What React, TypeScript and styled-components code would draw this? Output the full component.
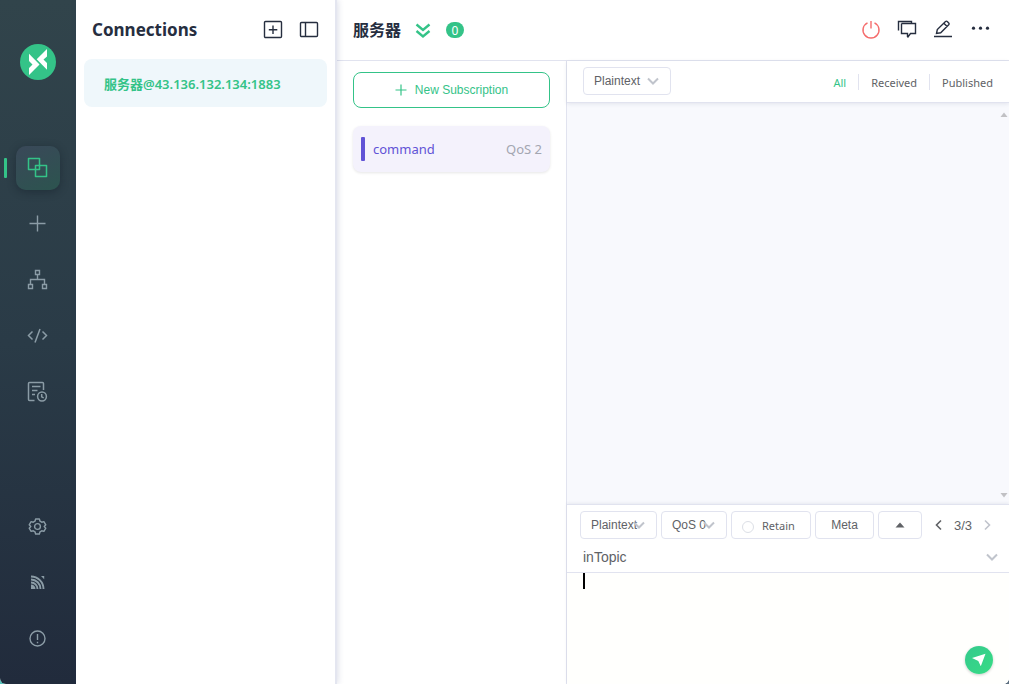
import React, { useState } from "react";
import styled, { createGlobalStyle, css } from "styled-components";

const colors = {
  green: "#34c388",
  ink: "#262e3f",
  text: "#606266",
  line: "#e1e3ef",
  mist: "#f8f9fd",
  purple: "#6153d6",
  faint: "#c0c4cc",
  nav: "#8b9ca6",
};

const uiFont = `"Noto Sans", "Noto Sans CJK SC", sans-serif`;
const arial = `"Liberation Sans", sans-serif`;

const GlobalStyle = createGlobalStyle`
  * { box-sizing: border-box; }
  body {
    margin: 0;
    font-family: ${uiFont};
    color: ${colors.text};
    background: linear-gradient(90deg, #55c4bd 0, #55c4bd 20px, #5d6f80 100%);
  }
  button, input, select, textarea { font: inherit; color: inherit; }
`;

const Shell = styled.div`
  display: grid;
  grid-template-columns: 76px 261px minmax(0, 1fr);
  min-height: 100vh;
  overflow: hidden;
  background: #fff;
  border-radius: 0 0 6px 6px;
`;

const Icon = styled.svg<{ $size?: number }>`
  display: block;
  flex: none;
  width: ${(p) => p.$size ?? 20}px;
  height: ${(p) => p.$size ?? 20}px;
  fill: none;
  stroke: currentColor;
`;

const plain = css`
  padding: 0;
  border: 0;
  background: none;
  cursor: pointer;
`;

/* Left navigation */
const Nav = styled.nav`
  display: flex;
  flex-direction: column;
  align-items: center;
  justify-content: space-between;
  padding: 44px 0 23px;
  background: linear-gradient(180deg, #31444b 0%, #2a3b47 50%, #212b3c 100%);
`;

const NavGroup = styled.div`
  display: flex;
  flex-direction: column;
  align-items: center;
  gap: 12px;
`;

const Logo = styled.svg`
  display: block;
  width: 36px;
  height: 36px;
  margin-bottom: 54px;
`;

const NavButton = styled.button<{ $active?: boolean }>`
  ${plain}
  position: relative;
  display: grid;
  place-items: center;
  width: 44px;
  height: 44px;
  border-radius: 10px;
  color: ${colors.nav};
  ${(p) =>
    p.$active &&
    css`
      color: ${colors.green};
      background: linear-gradient(155deg, #3a4859, #2c544f);
      box-shadow: 0 2px 8px rgba(15, 25, 35, 0.4);
      &::before {
        content: "";
        position: absolute;
        left: -12px;
        top: 12px;
        width: 3px;
        height: 20px;
        border-radius: 1px;
        background: ${colors.green};
      }
    `}
`;

/* Connection list */
const Connections = styled.aside`
  position: relative;
  padding: 0 8px;
  border-right: 2px solid #e4e6f0;
  box-shadow: 1px 0 6px rgba(40, 50, 110, 0.16);
`;

const ConnectionsHead = styled.header`
  display: flex;
  align-items: center;
  gap: 16px;
  height: 59px;
  padding: 0 8px;
`;

const Title = styled.h1`
  flex: 1;
  margin: 0;
  font-size: 17px;
  font-weight: 700;
  line-height: 24px;
  color: ${colors.ink};
`;

const IconButton = styled.button<{ $color?: string }>`
  ${plain}
  color: ${(p) => p.$color ?? colors.ink};
`;

const Connection = styled.a`
  display: flex;
  align-items: center;
  height: 48px;
  padding: 0 20px;
  border-radius: 8px;
  background: #eff7fb;
  color: ${colors.green};
  font-size: 13px;
  font-weight: 600;
  text-decoration: none;
  white-space: nowrap;
`;

/* Main area */
const Main = styled.main`
  display: flex;
  flex-direction: column;
  min-width: 0;
`;

const TopBar = styled.header`
  display: flex;
  align-items: center;
  height: 61px;
  padding: 0 18px 0 16px;
  border-bottom: 1px solid ${colors.line};
`;

const Name = styled.h2`
  margin: 0;
  font-size: 16px;
  font-weight: 600;
  line-height: 24px;
  color: ${colors.ink};
`;

const Collapse = styled(IconButton)`
  margin: 0 13px 0 12px;
`;

const Badge = styled.span`
  display: grid;
  place-items: center;
  width: 18px;
  height: 16px;
  border-radius: 8px;
  background: ${colors.green};
  color: #fff;
  font-size: 12px;
  line-height: 18px;
`;

const Tools = styled.div`
  display: flex;
  align-items: center;
  gap: 16px;
  margin-left: auto;
`;

const Body = styled.div`
  display: grid;
  flex: 1;
  grid-template-columns: 230px minmax(0, 1fr);
`;

const Subscriptions = styled.section`
  padding: 11px 16px;
  border-right: 1px solid ${colors.line};
`;

const NewButton = styled.button`
  ${plain}
  display: flex;
  align-items: center;
  justify-content: center;
  gap: 8px;
  width: 100%;
  height: 36px;
  border: 1px solid ${colors.green};
  border-radius: 8px;
  color: ${colors.green};
  font-family: ${arial};
  font-size: 12px;
`;

const Topic = styled.div`
  display: flex;
  align-items: center;
  height: 46px;
  margin-top: 18px;
  padding: 0 8px;
  border-radius: 8px;
  background: #f4f2fc;
  box-shadow: 0 1px 3px rgba(0, 0, 0, 0.1);
  color: ${colors.purple};
  font-size: 13px;
  &::before {
    content: "";
    width: 4px;
    height: 24px;
    margin-right: 8px;
    border-radius: 1px;
    background: ${colors.purple};
  }
`;

const Qos = styled.span`
  margin-left: auto;
  color: #a3a6b1;
`;

const Chat = styled.section`
  display: flex;
  flex-direction: column;
  min-width: 0;
`;

const FilterBar = styled.div`
  position: relative;
  display: flex;
  align-items: flex-start;
  justify-content: space-between;
  height: 42px;
  padding: 6px 4px 0 16px;
  border-bottom: 1px solid ${colors.line};
  box-shadow: 0 1px 4px rgba(40, 50, 90, 0.1);
`;

const Filters = styled.div`
  display: flex;
  padding-top: 7px;
`;

const Filter = styled.button<{ $active?: boolean }>`
  ${plain}
  height: 16px;
  padding: 0 12px;
  color: ${(p) => (p.$active ? colors.green : colors.text)};
  font-size: 11px;
  line-height: 18px;
  & + & {
    border-left: 1px solid ${colors.line};
  }
`;

const Messages = styled.div`
  display: flex;
  flex: 1;
  flex-direction: column;
  align-items: flex-end;
  justify-content: space-between;
  padding: 8px 1px 5px;
  background: ${colors.mist};
`;

const box = css`
  height: 28px;
  border: 1px solid ${colors.line};
  border-radius: 4px;
  background: #fff;
  font-family: ${arial};
  font-size: 12px;
`;

const SelectBox = styled.div<{ $width: number }>`
  ${box}
  position: relative;
  width: ${(p) => p.$width}px;
  select {
    appearance: none;
    width: 100%;
    height: 26px;
    padding: 0 0 0 10px;
    border: 0;
    background: none;
    outline: 0;
  }
  svg {
    position: absolute;
    top: 6px;
    right: 10px;
    color: ${colors.faint};
    pointer-events: none;
  }
`;

const Composer = styled.form`
  position: relative;
  border-top: 1px solid ${colors.line};
  box-shadow: 0 -1px 3px rgba(40, 50, 90, 0.08);
  background: #fff;
`;

const Controls = styled.div`
  display: flex;
  align-items: center;
  gap: 4px;
  padding: 6px 16px 0 13px;
`;

const BoxButton = styled.button<{ $width: number }>`
  ${box}
  display: grid;
  place-items: center;
  width: ${(p) => p.$width}px;
  padding: 0;
  cursor: pointer;
`;

const Retain = styled.label`
  ${box}
  display: flex;
  align-items: center;
  gap: 8px;
  width: 80px;
  padding: 1px 10px 0;
  font-family: ${uiFont};
  font-size: 11px;
  input {
    appearance: none;
    width: 12px;
    height: 12px;
    margin: 3px 0 0;
    border: 1px solid #dcdfe6;
    border-radius: 50%;
  }
`;

const Pager = styled.div`
  display: flex;
  align-items: center;
  gap: 9px;
  margin-left: auto;
  font-family: ${arial};
  font-size: 13px;
`;

const TopicRow = styled.div`
  display: flex;
  align-items: center;
  height: 34px;
  padding: 2px 10px 0 16px;
  border-bottom: 1px solid ${colors.line};
`;

const TopicInput = styled.input`
  flex: 1;
  min-width: 0;
  padding: 0;
  border: 0;
  outline: 0;
  background: none;
  font-family: ${arial};
  font-size: 14px;
`;

const Editor = styled.div`
  position: relative;
  background: #fffffd;
`;

const Payload = styled.textarea`
  display: block;
  width: 100%;
  height: 111px;
  padding: 0 16px;
  border: 0;
  outline: 0;
  resize: none;
  background: none;
  caret-color: transparent;
`;

const Caret = styled.span`
  position: absolute;
  top: 0;
  left: 16px;
  width: 2px;
  height: 16px;
  background: #000;
`;

const Send = styled.button`
  ${plain}
  position: absolute;
  right: 16px;
  bottom: 10px;
  display: grid;
  place-items: center;
  width: 28px;
  height: 28px;
  border-radius: 50%;
  background: linear-gradient(135deg, #35c98d, #37dc85);
  box-shadow: 0 1px 3px rgba(0, 0, 0, 0.2);
  color: #fff;
`;

const Chevron = () => (
  <Icon $size={14} viewBox="0 0 14 14" strokeWidth="2" aria-hidden>
    <path d="M2 4.500 7 9.500l5-5" />
  </Icon>
);

const Triangle = ({ down = false }: { down?: boolean }) => (
  <Icon $size={8} viewBox="0 0 8 8" aria-hidden>
    <path d={down ? "M0.500 2h7L4 6.500z" : "M0.500 6h7L4 1.500z"} fill="#c1c1c4" stroke="none" />
  </Icon>
);

const mainNav = [
  {
    label: "Connections",
    art: <path d="M1.500 1.500h11v11h-11zM8.500 8.500h11v11h-11z" strokeWidth="1.500" strokeLinejoin="round" />,
  },
  { label: "New connection", art: <path d="M10.500 2.500v16M2.500 10.500h16" strokeWidth="1.400" /> },
  {
    label: "Viewer",
    art: (
      <path
        d="M8.500 1.500h4v4h-4zM1.500 15.500h4v4h-4zM15.500 15.500h4v4h-4zM10.500 5.500v5M3.500 15.500v-5h14v5"
        strokeWidth="1.400"
      />
    ),
  },
  {
    label: "Scripts",
    art: <path d="M5.500 6.500 1.500 10.500l4 4M15.500 6.500l4 4-4 4M13 4 8 17.500" strokeWidth="1.500" />,
  },
  {
    label: "Logs",
    art: (
      <g strokeWidth="1.500">
        <path d="M7.500 19.500H2.500q-1 0-1-1v-16q0-1 1-1h13q1 0 1 1V9M5 5.500h8.500M5 9.500h5.500M5 13.500h3" />
        <circle cx="15" cy="15.500" r="4.400" />
        <path d="M14.700 13v2.800l2 1" />
      </g>
    ),
  },
];

const footNav = [
  {
    label: "Settings",
    art: (
      <g strokeWidth="1.400" strokeLinejoin="round">
        <circle cx="10.500" cy="10.500" r="2.900" />
        <path d="M8.600 3h3.800l.6 2.200 1.700 1 2.200-.6 1.900 3.200-1.600 1.700 1.600 1.700-1.900 3.200-2.200-.6-1.700 1-.6 2.200H8.600L8 15.800l-1.700-1-2.200.6-1.900-3.200 1.600-1.700-1.600-1.700 1.900-3.200 2.200.6 1.700-1z" />
      </g>
    ),
  },
  {
    label: "Help",
    art: (
      <g strokeWidth="1.900">
        <path d="M4 12.500a4.500 4.500 0 0 1 4.500 4.500H4zM14 4h3.200v3.200z" fill="currentColor" stroke="none" />
        <path d="M4 10.500a6.500 6.500 0 0 1 6.500 6.500M4 7.500a9.500 9.500 0 0 1 9.500 9.500M4 4.500a12.500 12.500 0 0 1 12.500 12.500" />
      </g>
    ),
  },
  {
    label: "About",
    art: (
      <g strokeWidth="1.400">
        <circle cx="10.500" cy="10.500" r="7.500" />
        <path d="M10.500 6v6M10.500 13.700v1.500" />
      </g>
    ),
  },
];

export default function App() {
  const [filter, setFilter] = useState("All");
  return (
    <>
      <GlobalStyle />
      <Shell>
        <Nav>
          <NavGroup>
            <Logo viewBox="0 0 36 36" role="img" aria-label="MQTTX">
              <circle cx="18" cy="18" r="18" fill={colors.green} />
              <path d="M27 5v7.500l-3.500 3.100L27 19V25.800L16.700 15.300zM9 9.800 19.500 20.400 9 31v-7l3.500-3.500L9 17z" fill="#fff" />
            </Logo>
            {mainNav.map((item, i) => (
              <NavButton key={item.label} $active={i === 0} aria-label={item.label}>
                <Icon $size={22} viewBox="0 0 22 22">{item.art}</Icon>
              </NavButton>
            ))}
          </NavGroup>
          <NavGroup>
            {footNav.map((item) => (
              <NavButton key={item.label} aria-label={item.label}>
                <Icon $size={22} viewBox="0 0 22 22">{item.art}</Icon>
              </NavButton>
            ))}
          </NavGroup>
        </Nav>

        <Connections>
          <ConnectionsHead>
            <Title>Connections</Title>
            <IconButton aria-label="Add">
              <Icon viewBox="0 0 20 20" strokeWidth="1.400">
                <rect x="1.500" y="1.500" width="17" height="16" rx="1" />
                <path d="M10 5.500v8.500M5.800 9.700h8.500" />
              </Icon>
            </IconButton>
            <IconButton aria-label="Toggle list">
              <Icon viewBox="0 0 20 20" strokeWidth="1.400">
                <rect x="1.500" y="2.500" width="17" height="14" rx="1" />
                <path d="M6.500 2.500v14" />
              </Icon>
            </IconButton>
          </ConnectionsHead>
          <Connection href="#server">服务器@43.136.132.134:1883</Connection>
        </Connections>

        <Main>
          <TopBar>
            <Name>服务器</Name>
            <Collapse $color={colors.green} aria-label="Collapse">
              <Icon viewBox="0 0 20 20" strokeWidth="2.400">
                <path d="m3.500 4.500 6.500 5.500 6.500-5.500M3.500 11l6.500 5.500 6.500-5.500" />
              </Icon>
            </Collapse>
            <Badge>0</Badge>
            <Tools>
              <IconButton $color="#f56c6c" aria-label="Disconnect">
                <Icon viewBox="0 0 20 20" strokeWidth="1.400">
                  <path d="M10 1v7.500M6.500 2.800a8 8 0 1 0 7 0" />
                </Icon>
              </IconButton>
              <IconButton aria-label="Messages">
                <Icon viewBox="0 0 20 20" strokeWidth="1.400">
                  <path d="M1.500 10.500v-9h13v2M4.500 3.500h14v10h-5L10.500 17.500M10.500 17v-3.500h-6v-10" />
                </Icon>
              </IconButton>
              <IconButton aria-label="Edit">
                <Icon viewBox="0 0 20 20" strokeWidth="1.400">
                  <path d="M1 16.500h18M3.500 13.500l.8-4L12.500 1.500q1-.8 2 .2l1.200 1.200q.8.900 0 1.900l-8 8zM10.800 3.300l3.400 3.300" />
                </Icon>
              </IconButton>
              <IconButton aria-label="More">
                <Icon $size={22} viewBox="0 0 22 22">
                  <g fill="currentColor" stroke="none">
                    <circle cx="4.500" cy="9.200" r="1.600" />
                    <circle cx="11.500" cy="9.200" r="1.600" />
                    <circle cx="18.500" cy="9.200" r="1.600" />
                  </g>
                </Icon>
              </IconButton>
            </Tools>
          </TopBar>

          <Body>
            <Subscriptions>
              <NewButton>
                <Icon $size={12} viewBox="0 0 12 12" strokeWidth="1.200">
                  <path d="M6 .5v11M.5 6h11" />
                </Icon>
                New Subscription
              </NewButton>
              <Topic>
                command<Qos>QoS 2</Qos>
              </Topic>
            </Subscriptions>

            <Chat>
              <FilterBar>
                <SelectBox $width={88}>
                  <select aria-label="Display format">
                    <option>Plaintext</option>
                    <option>JSON</option>
                  </select>
                  <Chevron />
                </SelectBox>
                <Filters>
                  {["All", "Received", "Published"].map((name) => (
                    <Filter key={name} $active={filter === name} onClick={() => setFilter(name)}>
                      {name}
                    </Filter>
                  ))}
                </Filters>
              </FilterBar>
              <Messages>
                <Triangle />
                <Triangle down />
              </Messages>
              <Composer onSubmit={(e) => e.preventDefault()}>
                <Controls>
                  <SelectBox $width={77}>
                    <select aria-label="Payload format">
                      <option>Plaintext</option>
                      <option>JSON</option>
                    </select>
                    <Chevron />
                  </SelectBox>
                  <SelectBox $width={66}>
                    <select aria-label="QoS">
                      <option>QoS 0</option>
                      <option>QoS 1</option>
                      <option>QoS 2</option>
                    </select>
                    <Chevron />
                  </SelectBox>
                  <Retain>
                    <input type="checkbox" />
                    Retain
                  </Retain>
                  <BoxButton type="button" $width={59}>Meta</BoxButton>
                  <BoxButton type="button" $width={44} aria-label="Collapse editor">
                    <Icon $size={10} viewBox="0 0 10 10">
                      <path d="M.5 7.500h9L5 2.500z" fill="currentColor" stroke="none" />
                    </Icon>
                  </BoxButton>
                  <Pager>
                    <IconButton type="button" $color={colors.text} aria-label="Previous">
                      <Icon $size={12} viewBox="0 0 12 12" strokeWidth="1.600">
                        <path d="M8 1.500 3.500 6 8 10.500" />
                      </Icon>
                    </IconButton>
                    3/3
                    <IconButton type="button" $color={colors.faint} aria-label="Next">
                      <Icon $size={12} viewBox="0 0 12 12" strokeWidth="1.600">
                        <path d="M4 1.500 8.500 6 4 10.500" />
                      </Icon>
                    </IconButton>
                  </Pager>
                </Controls>
                <TopicRow>
                  <TopicInput aria-label="Topic" defaultValue="inTopic" />
                  <IconButton type="button" $color={colors.faint} aria-label="Topic history">
                    <Chevron />
                  </IconButton>
                </TopicRow>
                <Editor>
                  <Payload aria-label="Payload" />
                  <Caret />
                  <Send aria-label="Send">
                    <Icon $size={16} viewBox="0 0 16 16">
                      <path d="M1 6 14.500 1.700 9.800 14.300 7.300 9z" fill="currentColor" stroke="none" />
                    </Icon>
                  </Send>
                </Editor>
              </Composer>
            </Chat>
          </Body>
        </Main>
      </Shell>
    </>
  );
}
